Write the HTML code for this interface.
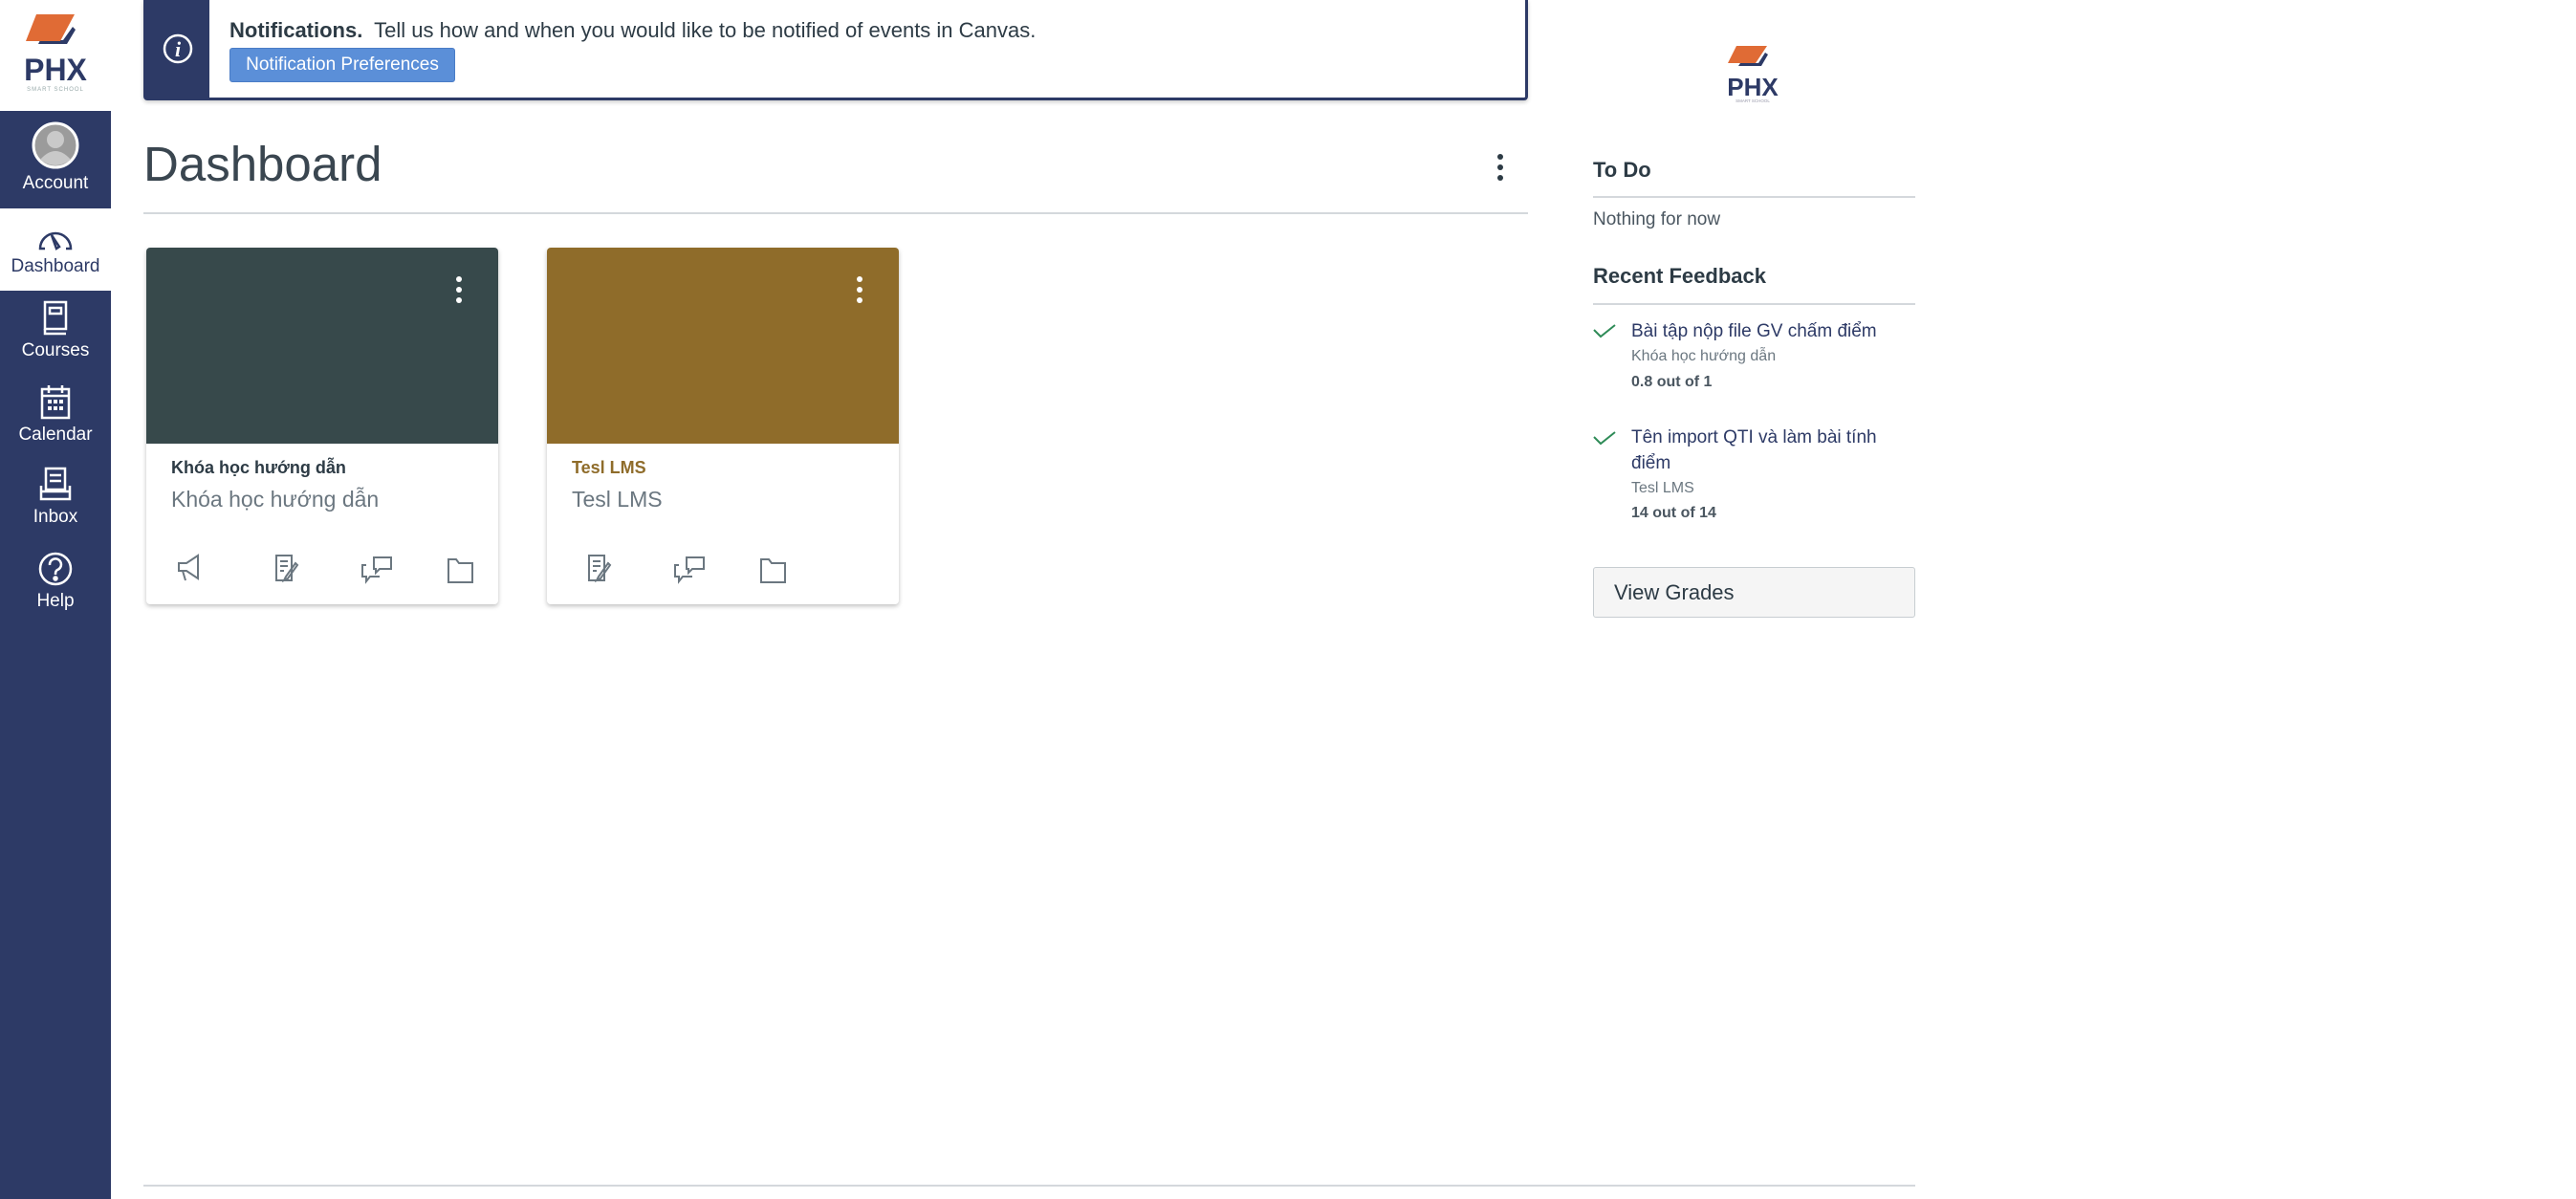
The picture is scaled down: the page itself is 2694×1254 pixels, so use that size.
<!DOCTYPE html>
<html><head><meta charset="utf-8"><style>
*{box-sizing:border-box;margin:0;padding:0}
body{width:2694px;height:1254px;background:#fff;font-family:"Liberation Sans","Noto Sans CJK SC",sans-serif;position:relative;overflow:hidden;color:#2d3b45}
.abs{position:absolute}
.side{left:0;top:0;width:116px;height:1254px;background:#2d3a66}
.logo{left:0;top:0;width:116px;height:116px;background:#fff}
.nav{left:0;width:116px;text-align:center;color:#fff;font-size:19px}
.nav svg{display:block;margin:0 auto 4px}
.ban{left:150px;top:0;width:1448px;height:105px;border:3px solid #2d3a66;border-top:none;border-radius:0 0 4px 4px;box-shadow:0 2px 4px rgba(0,0,0,.2)}
.banl{left:0;top:0;width:66px;height:102px;background:#2d3a66}
.btn{left:87px;top:50px;width:236px;height:36px;background:#5b8fd8;border:1px solid #4a7cc6;border-radius:3px;color:#fff;font-size:19px;line-height:34px;text-align:center}
.card{width:368px;height:373px;top:259px;border-radius:4px;box-shadow:0 2px 5px rgba(0,0,0,.25);background:#fff;overflow:hidden}
.hd{left:0;top:0;width:368px;height:205px}
.dots{right:38px;top:30px;width:6px}
.dots i{display:block;width:6px;height:6px;border-radius:3px;background:#fff;margin-bottom:5px}
.t1{left:26px;top:220px;font-size:18px;font-weight:bold}
.t2{left:26px;top:250px;font-size:23px;color:#6b7780}
.ic{top:318px}
.rs{left:1666px;width:337px}
</style></head><body>
<div class="abs side"></div>
<div class="abs logo">
<svg width="116" height="100" viewBox="0 0 116 100"><path d="M40 46 L70 46 L79 31 L76 28 L66 42 L42 42Z" fill="#2d3a66"/><path d="M38 15 L78 15 L63 43 L27 43Z" fill="#e06b35"/><text x="58" y="84" text-anchor="middle" font-family="Liberation Sans" font-weight="bold" font-size="32" fill="#2d3a66">PHX</text><text x="58" y="95" text-anchor="middle" font-size="6" fill="#9aa" letter-spacing="1">SMART SCHOOL</text></svg>
</div>
<div class="abs nav" style="top:117px;height:101px;padding-top:10px">
<svg width="50" height="50" viewBox="0 0 50 50"><circle cx="25" cy="25" r="23" fill="#9b9b9b" stroke="#fff" stroke-width="3"/><circle cx="25" cy="19" r="9" fill="#c9c9c9"/><path d="M9 40 Q25 22 41 40 Q25 52 9 40Z" fill="#c9c9c9"/></svg>Account</div>
<div class="abs nav" style="top:218px;height:86px;background:#fff;color:#2d3a66;padding-top:14px">
<svg width="38" height="32" viewBox="0 0 38 32" fill="none" stroke="#2d3a66" stroke-width="2.5"><path d="M8 28 L3 28 A16 16 0 1 1 35 28 L30 28"/><path d="M15 14 L20 28 L23 26Z"/></svg>Dashboard</div>
<div class="abs nav" style="top:310px;padding-top:4px"><svg width="30" height="38" viewBox="0 0 30 38" fill="none" stroke="#fff" stroke-width="2.5"><rect x="4" y="2" width="22" height="28"/><rect x="9" y="8" width="12" height="6"/><path d="M4 30 L4 35 L26 35"/></svg>Courses</div>
<div class="abs nav" style="top:398px;padding-top:4px"><svg width="34" height="38" viewBox="0 0 34 38" fill="none" stroke="#fff" stroke-width="2.5"><rect x="3" y="5" width="28" height="30"/><path d="M10 1v8M24 1v8M3 12h28"/><path d="M9 18h4M15 18h4M21 18h4M9 25h4M15 25h4M21 25h4" stroke-width="4"/></svg>Calendar</div>
<div class="abs nav" style="top:484px;padding-top:4px"><svg width="36" height="38" viewBox="0 0 36 38" fill="none" stroke="#fff" stroke-width="2.5"><rect x="8" y="2" width="20" height="22"/><path d="M12 9h12M12 15h12M3 20v14h30V20M3 26h30"/></svg>Inbox</div>
<div class="abs nav" style="top:572px;padding-top:4px"><svg width="38" height="38" viewBox="0 0 38 38" fill="none" stroke="#fff" stroke-width="2.5"><circle cx="19" cy="19" r="16"/><path d="M13 15a6 6 0 1 1 8 5c-2 1-2 3-2 5"/><circle cx="19" cy="29" r="1.5" fill="#fff"/></svg>Help</div>

<div class="abs ban">
<div class="abs banl"><svg width="66" height="102" viewBox="0 0 66 102"><circle cx="33" cy="51" r="14" fill="none" stroke="#fff" stroke-width="2.5"/><text x="33" y="59" text-anchor="middle" fill="#fff" font-family="Liberation Serif" font-style="italic" font-weight="bold" font-size="22">i</text></svg></div>
<div class="abs" style="left:87px;top:19px;font-size:22px;color:#2d3b45"><b>Notifications.</b>&nbsp; Tell us how and when you would like to be notified of events in Canvas.</div>
<div class="abs btn">Notification Preferences</div>
</div>

<div class="abs" style="left:150px;top:142px;font-size:51px;font-weight:300;color:#3a4650">Dashboard</div>
<div class="abs" style="left:1566px;top:161px"><i style="display:block;width:6px;height:6px;border-radius:3px;background:#2d3b45;margin-bottom:5px"></i><i style="display:block;width:6px;height:6px;border-radius:3px;background:#2d3b45;margin-bottom:5px"></i><i style="display:block;width:6px;height:6px;border-radius:3px;background:#2d3b45"></i></div>
<div class="abs" style="left:150px;top:222px;width:1448px;height:2px;background:#d4d8dc"></div>

<div class="abs card" style="left:153px">
<div class="abs hd" style="background:#37494b"></div>
<div class="abs dots"><i></i><i></i><i></i></div>
<div class="abs t1">Khóa học hướng dẫn</div>
<div class="abs t2">Khóa học hướng dẫn</div>
<svg class="abs ic" style="left:30px" width="320" height="34" viewBox="0 0 320 34" fill="none" stroke="#6b7780" stroke-width="2"><path d="M4 12h8l12-8v24l-12-8H4z M8 20l3 10"/><path d="M106 4h16v26h-16z M110 10h8M110 15h8M110 20h4 M126 12l-10 14-2 4 4-2 10-14z"/><path d="M208 6h18v12h-12l-4 4v-4h-2z M200 14h-4v12h4v5l4-5h10"/><path d="M286 8h8l3 4h14v20h-25z"/></svg>
</div>
<div class="abs card" style="left:572px">
<div class="abs hd" style="background:#8f6c2a"></div>
<div class="abs dots"><i></i><i></i><i></i></div>
<div class="abs t1" style="color:#8f6c2a">Tesl LMS</div>
<div class="abs t2">Tesl LMS</div>
<svg class="abs ic" style="left:30px" width="320" height="34" viewBox="0 0 320 34" fill="none" stroke="#6b7780" stroke-width="2"><path d="M14 4h16v26h-16z M18 10h8M18 15h8M18 20h4 M34 12l-10 14-2 4 4-2 10-14z"/><path d="M116 6h18v12h-12l-4 4v-4h-2z M108 14h-4v12h4v5l4-5h10"/><path d="M194 8h8l3 4h14v20h-25z"/></svg>
</div>

<svg class="abs" style="left:1791px;top:44px" width="84" height="66" viewBox="0 0 84 66"><path d="M27 25 L51 25 L58 13 L55 11 L48 22 L29 22Z" fill="#2d3a66"/><path d="M25 4 L57 4 L45 22 L16 22Z" fill="#e06b35"/><text x="42" y="56" text-anchor="middle" font-weight="bold" font-size="26" fill="#2d3a66">PHX</text><text x="42" y="63" text-anchor="middle" font-size="4.5" fill="#99a">SMART SCHOOL</text></svg>

<div class="abs rs" style="top:165px;font-size:22px;font-weight:bold">To Do</div>
<div class="abs rs" style="top:205px;height:2px;background:#d4d8dc"></div>
<div class="abs rs" style="top:219px;font-size:19px;color:#4a5660">Nothing for now</div>
<div class="abs rs" style="top:276px;font-size:22px;font-weight:bold">Recent Feedback</div>
<div class="abs rs" style="top:317px;height:2px;background:#d4d8dc"></div>
<svg class="abs" style="left:1666px;top:338px" width="24" height="16" viewBox="0 0 24 16" fill="none" stroke="#2e8b57" stroke-width="2"><path d="M1 7l7 7L23 2"/></svg>
<svg class="abs" style="left:1666px;top:450px" width="24" height="16" viewBox="0 0 24 16" fill="none" stroke="#2e8b57" stroke-width="2"><path d="M1 7l7 7L23 2"/></svg>
<div class="abs" style="left:1706px;top:334px;font-size:19px;color:#2d3a66;width:290px;line-height:26px">Bài tập nộp file GV chấm điểm</div>
<div class="abs" style="left:1706px;top:364px;font-size:16px;color:#6b7780">Khóa học hướng dẫn</div>
<div class="abs" style="left:1706px;top:391px;font-size:16px;font-weight:bold;color:#4a5660">0.8 out of 1</div>
<div class="abs" style="left:1706px;top:444px;font-size:19px;color:#2d3a66;width:290px;line-height:27px">Tên import QTI và làm bài tính điểm</div>
<div class="abs" style="left:1706px;top:502px;font-size:16px;color:#6b7780">Tesl LMS</div>
<div class="abs" style="left:1706px;top:528px;font-size:16px;font-weight:bold;color:#4a5660">14 out of 14</div>
<div class="abs rs" style="top:593px;height:53px;background:#f5f5f5;border:1px solid #c7cdd1;border-radius:3px;font-size:22px;line-height:51px;padding-left:21px">View Grades</div>

<div class="abs" style="left:150px;top:1239px;width:1853px;height:2px;background:#d4d8dc"></div>
</body></html>
